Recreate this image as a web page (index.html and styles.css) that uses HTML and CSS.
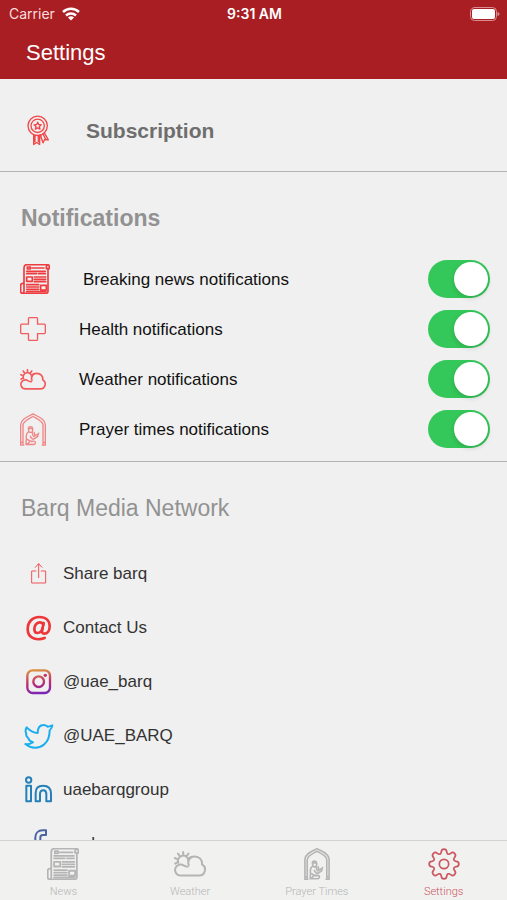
FILE: index.html
```html
<!DOCTYPE html>
<html lang="en">
<head>
    <meta charset="utf-8">
    <meta name="viewport" content="width=device-width, initial-scale=1">
    <title>Settings</title>
    <link rel="stylesheet" href="styles.css">
</head>
<body>
    <!-- icons used both in the list and in the tab bar -->
    <svg class="icon-defs" width="0" height="0" aria-hidden="true">
        <symbol id="icon-news" viewBox="0 0 90 90">
            <path d="M12 58H8a6 6 0 0 0-6 6v18a6 6 0 0 0 6 6h70a6 6 0 0 0 6-6V15M12 58v24a6 6 0 0 1-5 6M12 58V11a9 9 0 0 1 9-9h61a6 6 0 0 1 6 6v6h-9V9a6 6 0 0 1 4-6"/>
            <path d="M22 9h9v6h-9zM36 12h36M20 22h56M20 29h30M56 29h20M20 39h17v13H20zM43 39h34M43 46h34M43 53h34M20 62h36M20 69h36M20 76h36M62 64h17v14H62zM20 83h58"/>
        </symbol>
        <symbol id="icon-weather" viewBox="0 0 80 64">
            <path d="M17 61a14 14 0 0 1-10-24c3-3 6-4 10-4 2 0 5 1 6 2 5 3 8 5 12 3M17 61h46a15 15 0 0 0 7-28c1-12-7-20-18-20-8 0-14 5-16 12-1 3-1 6 1 9"/>
            <path d="M11 29a13 13 0 1 1 25-5M23 2v6M10 6l4 6M36 6l-4 6M2 17l6 3M3 31l5-3M43 14l-5 3"/>
        </symbol>
        <symbol id="icon-prayer" viewBox="0 0 78 98">
            <path d="M2 96V34C3 17 23 11 39 2c16 9 36 15 37 32v62M9 96V36c1-13 16-18 30-26 14 8 29 13 30 26v60M2 96h9M67 96h9M2 88h7M69 88h7"/>
            <path d="M25 46c0-7 12-8 13 0v6c0 7-12 8-12 0zM25 46h13M24 57c-6 5-6 13-5 20l-1 17h23c7 0 7-10 0-10l-14-1M37 58c0 6 1 10 4 12l10-6 3 5-13 9c-5 0-8-4-10-9M19 77l17 9M44 65l-1-7M53 66l3-6M20 94l8-7"/>
        </symbol>
    </svg>

    <header class="header">
        <div class="status-bar">
            <div class="status-left">
                <span>Carrier</span>
                <svg class="wifi" viewBox="0 0 36 28" aria-hidden="true">
                    <path d="M2 10a23 23 0 0 1 32 0M8 17a15 15 0 0 1 20 0"/>
                    <path class="wifi-dot" d="M18 27l-6-6a9 9 0 0 1 12 0z"/>
                </svg>
            </div>
            <span class="status-time">9:31 AM</span>
            <div class="status-right">
                <svg class="battery" viewBox="0 0 60 28" aria-hidden="true">
                    <rect class="battery-shell" x="1" y="1" width="52" height="26" rx="8"/>
                    <rect class="battery-level" x="4" y="4" width="46" height="20" rx="4"/>
                    <path class="battery-tip" d="M55 10v8q4-1 4-4t-4-4z"/>
                </svg>
            </div>
        </div>
        <h1>Settings</h1>
    </header>

    <main class="content">
        <section class="subscription">
            <a href="#subscription" class="subscription-link">
                <svg class="medal" viewBox="0 0 66 90" aria-hidden="true">
                    <circle cx="32" cy="31" r="29"/>
                    <circle cx="32" cy="31" r="20"/>
                    <path d="M32 20l3 7 8 1-6 5 2 8-7-4-7 4 2-8-6-5 8-1zM20 58v29l9-6 9 6V59M24 60v19M34 60v19M40 58l8 24 5-10 11 1-12-21M48 56l7 13"/>
                </svg>
                <span>Subscription</span>
            </a>
        </section>

        <section class="notifications">
            <h2>Notifications</h2>
            <div class="toggle-row">
                <svg class="icon-news" aria-hidden="true"><use href="#icon-news"/></svg>
                <label for="breaking">Breaking news notifications</label>
                <input type="checkbox" class="switch" id="breaking" checked>
            </div>
            <div class="toggle-row">
                <svg class="icon-health" viewBox="0 0 80 74" aria-hidden="true">
                    <path d="M29 2h22a3 3 0 0 1 3 3v17h21a3 3 0 0 1 3 3v23a3 3 0 0 1-3 3H54v18a3 3 0 0 1-3 3H29a3 3 0 0 1-3-3V51H5a3 3 0 0 1-3-3V25a3 3 0 0 1 3-3h21V5a3 3 0 0 1 3-3z"/>
                </svg>
                <label for="health">Health notifications</label>
                <input type="checkbox" class="switch" id="health" checked>
            </div>
            <div class="toggle-row">
                <svg class="icon-weather" aria-hidden="true"><use href="#icon-weather"/></svg>
                <label for="weather">Weather notifications</label>
                <input type="checkbox" class="switch" id="weather" checked>
            </div>
            <div class="toggle-row">
                <svg class="icon-prayer" aria-hidden="true"><use href="#icon-prayer"/></svg>
                <label for="prayer">Prayer times notifications</label>
                <input type="checkbox" class="switch" id="prayer" checked>
            </div>
        </section>

        <section class="network">
            <h2>Barq Media Network</h2>
            <ul>
                <li><a href="#share">
                    <svg class="share" viewBox="0 0 90 90" aria-hidden="true">
                        <path d="M36 36H23v36h42V36H52M44 56V15M34 25l10-11 10 11"/>
                    </svg>
                    <span>Share barq</span>
                </a></li>
                <li><a href="#contact">
                    <svg class="contact" viewBox="0 0 90 90" aria-hidden="true">
                        <path d="M62 75C45 82 11 81 11 49 11 26 26 12 46 12c19 0 31 11 31 28 0 13-7 22-16 22-7 0-8-5-6-13l4-19"/>
                        <path d="M58 35c-2-5-6-7-11-7-10 0-16 11-16 20 0 8 4 12 9 12 8 0 14-8 16-15"/>
                    </svg>
                    <span>Contact Us</span>
                </a></li>
                <li><a href="#instagram">
                    <svg class="instagram" viewBox="0 0 90 90" aria-hidden="true">
                        <linearGradient id="ig" gradientUnits="userSpaceOnUse" x1="40" y1="8" x2="50" y2="82">
                            <stop offset="0" stop-color="#dc923d"/>
                            <stop offset=".5" stop-color="#c02f6c"/>
                            <stop offset="1" stop-color="#7625bb"/>
                        </linearGradient>
                        <rect x="10" y="10" width="68" height="68" rx="16"/>
                        <circle cx="44" cy="44" r="16"/>
                        <circle class="ig-dot" cx="64" cy="25" r="5"/>
                    </svg>
                    <span>@uae_barq</span>
                </a></li>
                <li><a href="#twitter">
                    <svg class="twitter" viewBox="0 0 90 90" aria-hidden="true">
                        <path d="M4 69c11 2 18-1 23-5-8-1-12-5-14-12-5-5-8-10-6-13-3-7-3-14 1-20 10 10 20 17 33 17 0-14 5-24 18-24 5 0 8 2 12 5 5 0 9-2 14-4-1 6-4 11-8 15 0 17-4 32-16 42-17 15-39 13-57-1z"/>
                    </svg>
                    <span>@UAE_BARQ</span>
                </a></li>
                <li><a href="#linkedin">
                    <svg class="linkedin" viewBox="0 0 90 90" aria-hidden="true">
                        <circle cx="14" cy="15" r="8"/>
                        <path d="M7 32h14v47H7zM35 79V54c0-14 8-22 22-22s24 8 24 24v23H67V57c0-7-3-11-9-11s-10 4-10 11v22z"/>
                    </svg>
                    <span>uaebarqgroup</span>
                </a></li>
                <li><a href="#facebook">
                    <svg class="facebook" viewBox="0 0 90 90" aria-hidden="true">
                        <path d="M66 4H56C42 4 34 13 34 25v11H23v14h11v34h15V50h14l3-14H49V26c0-5 2-8 7-8h10z"/>
                    </svg>
                    <span>uaebarq</span>
                </a></li>
            </ul>
        </section>
    </main>

    <nav class="tab-bar">
        <a href="#news">
            <svg aria-hidden="true"><use href="#icon-news"/></svg>
            <span>News</span>
        </a>
        <a href="#weather-tab">
            <svg aria-hidden="true"><use href="#icon-weather"/></svg>
            <span>Weather</span>
        </a>
        <a href="#prayer-times">
            <svg aria-hidden="true"><use href="#icon-prayer"/></svg>
            <span>Prayer Times</span>
        </a>
        <a href="#settings" class="active">
            <svg viewBox="0 0 96 96" aria-hidden="true">
                <path d="M40 11C41 1 55 1 56 11c1 8 6 10 12 5 8-7 19 4 12 12-5 6-3 11 5 12 10 1 10 15 0 16-8 1-10 6-5 12 7 8-4 19-12 12-6-5-11-3-12 5-1 10-15 10-16 0-1-8-6-10-12-5-8 7-19-4-12-12 5-6 3-11-5-12-10-1-10-15 0-16 8-1 10-6 5-12-7-8 4-19 12-12 6 5 11 3 12-5z"/>
                <circle cx="48" cy="48" r="14"/>
            </svg>
            <span>Settings</span>
        </a>
    </nav>
</body>
</html>
```
FILE: styles.css
```css
* {
    box-sizing: border-box;
}

body {
    display: flex;
    flex-direction: column;
    height: 100vh;
    margin: 0;
    background-color: #f0f0f0;
    color: #333;
    font-family: "Liberation Sans", Arial, sans-serif;
    font-size: 17px;
}

a {
    color: inherit;
    text-decoration: none;
}

svg {
    flex-shrink: 0;
    fill: none;
    stroke: currentColor;
    stroke-width: 5;
    stroke-linejoin: round;
    stroke-linecap: round;
}

.icon-defs {
    position: absolute;
}

/* header */
.header {
    background-color: #a91e22;
    color: #fff;
}

.status-bar {
    display: grid;
    grid-template-columns: 1fr auto 1fr;
    align-items: center;
    height: 27px;
    padding: 0 7px 0 9px;
    font-family: Inter, "Liberation Sans", sans-serif;
    font-size: 14px;
}

.status-left {
    display: flex;
    align-items: center;
    gap: 7px;
    color: #f8dede;
}

.status-time {
    font-weight: 600;
}

.status-right {
    display: flex;
    justify-content: flex-end;
}

.wifi {
    width: 18px;
    height: 14px;
    color: #fff;
    stroke-width: 5;
    stroke-linecap: butt;
}

.wifi-dot {
    fill: #fff;
    stroke: none;
}

.battery {
    width: 30px;
    height: 14px;
    stroke-width: 2;
}

.battery-shell {
    stroke: #d98f91;
}

.battery-level {
    fill: #fff;
    stroke: none;
}

.battery-tip {
    fill: #d98f91;
    stroke: none;
}

h1 {
    margin: 0;
    padding: 13px 26px;
    font-size: 22px;
    font-weight: normal;
    line-height: 26px;
}

/* content */
.content {
    flex: 1;
    min-height: 0;
    overflow-y: auto;
    scrollbar-width: none;
}

h2 {
    margin: 0;
    color: #929292;
    font-size: 23px;
    line-height: 28px;
}

.subscription {
    border-bottom: 1px solid #b4b4b4;
}

.subscription-link {
    display: flex;
    align-items: center;
    gap: 37px;
    padding: 36px 27px 25px;
    color: #6e6e6e;
    font-size: 21px;
    font-weight: bold;
}

.medal {
    width: 22px;
    height: 31px;
    color: #f0484a;
    stroke-width: 4;
}

.notifications {
    padding: 32px 17px 7px 20px;
    border-bottom: 1px solid #b4b4b4;
}

.notifications h2 {
    margin-bottom: 22px;
    padding-left: 1px;
}

.toggle-row {
    display: flex;
    align-items: center;
    gap: 33px;
    height: 50px;
    color: #f25a5c;
}

.toggle-row label {
    flex: 1;
    padding-top: 2px;
    color: #111;
}

.icon-news {
    width: 30px;
    height: 30px;
    color: #ee3b3e;
}

.icon-health {
    width: 26px;
    height: 24px;
    stroke-width: 4;
}

.icon-weather {
    width: 26px;
    height: 21px;
}

.icon-prayer {
    width: 26px;
    height: 33px;
    color: #f08586;
    stroke-width: 4;
}

.switch {
    display: flex;
    justify-content: flex-end;
    width: 62px;
    height: 38px;
    margin: 0;
    padding: 2px;
    border-radius: 19px;
    background-color: #34c759;
    appearance: none;
    cursor: pointer;
}

.switch::before {
    content: "";
    width: 34px;
    height: 34px;
    border-radius: 50%;
    background-color: #fff;
    box-shadow: 0 2px 5px rgba(0, 0, 0, 0.15);
}

.switch:not(:checked) {
    justify-content: flex-start;
    background-color: #ddd;
}

.network {
    padding: 32px 20px 20px;
}

.network h2 {
    margin-bottom: 25px;
    padding-left: 1px;
    font-weight: normal;
}

.network ul {
    margin: 0;
    padding: 0 4px;
    list-style: none;
}

.network a {
    display: flex;
    align-items: center;
    gap: 9px;
    height: 54px;
}

.network svg {
    width: 30px;
    height: 30px;
    stroke-width: 6;
}

.network .share {
    color: #ee5558;
    stroke-width: 3;
}

.network .contact {
    color: #ee3538;
    stroke-width: 8;
}

.network .instagram {
    stroke: url(#ig);
    stroke-width: 7;
}

.network .ig-dot {
    fill: #c02f6c;
    stroke: none;
}

.twitter {
    color: #1baeee;
}

.linkedin {
    color: #2680b8;
}

.facebook {
    color: #4a63a3;
}

/* tab bar */
.tab-bar {
    display: flex;
    height: 60px;
    border-top: 1px solid #d2d2d2;
    background-color: #f1f1f0;
    color: #b5b5b5;
    font-family: Roboto, sans-serif;
    font-size: 11px;
    font-weight: 300;
}

.tab-bar a {
    display: flex;
    flex: 1;
    flex-direction: column;
    align-items: center;
    gap: 5px;
    padding-top: 7px;
}

.tab-bar svg {
    width: 32px;
    height: 32px;
}

.tab-bar .active {
    color: #cc5560;
}
```
